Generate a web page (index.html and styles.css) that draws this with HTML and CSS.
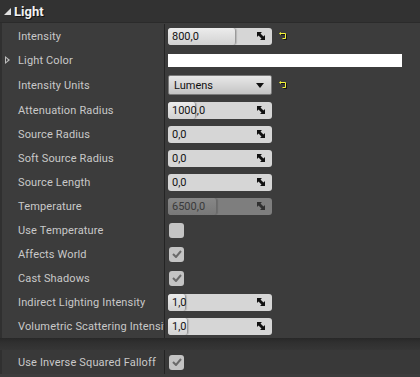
FILE: index.html
```html
<!DOCTYPE html>
<html lang="en">
<head>
  <meta charset="UTF-8">
  <title>Details - Light</title>
  <link rel="stylesheet" href="styles.css">
</head>
<body>
  <div class="panel">
    <div class="category"><span class="cat-arrow"></span>Light</div>

    <div class="section">
      <div class="row">
        <div class="name">Intensity</div>
        <div class="value">
          <div class="num"><div class="fill" style="width:67px"></div><span class="num-text">800,0</span><svg class="spin" viewBox="0 0 8 8"><path d="M0 0H5L3.5 1.5 6.5 4.5 8 3V8H3L4.5 6.5 1.5 3.5 0 5Z"/></svg></div>
          <svg class="reset" viewBox="0 0 10 9"><path class="reset-shadow" d="M2 2.5H7.5V7.5H4.5"/><path d="M1 1.5H6.5V6.5H3.5"/><path d="M0 1.5L2 0V3Z" class="reset-head"/></svg>
        </div>
      </div>

      <div class="row">
        <div class="name"><span class="expander"></span>Light Color</div>
        <div class="value"><div class="color-bar"></div></div>
      </div>

      <div class="row tall">
        <div class="name">Intensity Units</div>
        <div class="value">
          <div class="combo"><span>Lumens</span><span class="combo-arrow"></span></div>
          <svg class="reset" viewBox="0 0 10 9"><path class="reset-shadow" d="M2 2.5H7.5V7.5H4.5"/><path d="M1 1.5H6.5V6.5H3.5"/><path d="M0 1.5L2 0V3Z" class="reset-head"/></svg>
        </div>
      </div>

      <div class="row">
        <div class="name">Attenuation Radius</div>
        <div class="value">
          <div class="num"><div class="fill" style="width:27px"></div><span class="num-text">1000,0</span><svg class="spin" viewBox="0 0 8 8"><path d="M0 0H5L3.5 1.5 6.5 4.5 8 3V8H3L4.5 6.5 1.5 3.5 0 5Z"/></svg></div>
        </div>
      </div>

      <div class="row">
        <div class="name">Source Radius</div>
        <div class="value">
          <div class="num"><span class="num-text">0,0</span><svg class="spin" viewBox="0 0 8 8"><path d="M0 0H5L3.5 1.5 6.5 4.5 8 3V8H3L4.5 6.5 1.5 3.5 0 5Z"/></svg></div>
        </div>
      </div>

      <div class="row">
        <div class="name">Soft Source Radius</div>
        <div class="value">
          <div class="num"><span class="num-text">0,0</span><svg class="spin" viewBox="0 0 8 8"><path d="M0 0H5L3.5 1.5 6.5 4.5 8 3V8H3L4.5 6.5 1.5 3.5 0 5Z"/></svg></div>
        </div>
      </div>

      <div class="row">
        <div class="name">Source Length</div>
        <div class="value">
          <div class="num"><span class="num-text">0,0</span><svg class="spin" viewBox="0 0 8 8"><path d="M0 0H5L3.5 1.5 6.5 4.5 8 3V8H3L4.5 6.5 1.5 3.5 0 5Z"/></svg></div>
        </div>
      </div>

      <div class="row">
        <div class="name">Temperature</div>
        <div class="value">
          <div class="num disabled"><div class="fill" style="width:48px"></div><span class="num-text">6500,0</span><svg class="spin" viewBox="0 0 8 8"><path d="M0 0H5L3.5 1.5 6.5 4.5 8 3V8H3L4.5 6.5 1.5 3.5 0 5Z"/></svg></div>
        </div>
      </div>

      <div class="row">
        <div class="name">Use Temperature</div>
        <div class="value"><div class="check"></div></div>
      </div>

      <div class="row">
        <div class="name">Affects World</div>
        <div class="value"><div class="check"><svg viewBox="0 0 10 8"><path d="M1 4L4 7 9 1"/></svg></div></div>
      </div>

      <div class="row">
        <div class="name">Cast Shadows</div>
        <div class="value"><div class="check"><svg viewBox="0 0 10 8"><path d="M1 4L4 7 9 1"/></svg></div></div>
      </div>

      <div class="row">
        <div class="name">Indirect Lighting Intensity</div>
        <div class="value">
          <div class="num"><div class="fill" style="width:17px"></div><span class="num-text">1,0</span><svg class="spin" viewBox="0 0 8 8"><path d="M0 0H5L3.5 1.5 6.5 4.5 8 3V8H3L4.5 6.5 1.5 3.5 0 5Z"/></svg></div>
        </div>
      </div>

      <div class="row">
        <div class="name">Volumetric Scattering Intensity</div>
        <div class="value">
          <div class="num"><div class="fill" style="width:19px"></div><span class="num-text">1,0</span><svg class="spin" viewBox="0 0 8 8"><path d="M0 0H5L3.5 1.5 6.5 4.5 8 3V8H3L4.5 6.5 1.5 3.5 0 5Z"/></svg></div>
        </div>
      </div>
    </div>

    <div class="separator"></div>

    <div class="section lower">
      <div class="row">
        <div class="name">Use Inverse Squared Falloff</div>
        <div class="value"><div class="check"><svg viewBox="0 0 10 8"><path d="M1 4L4 7 9 1"/></svg></div></div>
      </div>
    </div>
  </div>
</body>
</html>
```

FILE: styles.css
```css
html, body {
  margin: 0;
  padding: 0;
  background-color: #383838;
}

body {
  font-family: Roboto, "Liberation Sans", sans-serif;
  font-size: 11px;
  width: 420px;
  height: 377px;
  overflow: hidden;
}

.panel {
  background-color: #3c3c3c;
  height: 377px;
}

/* Category header */
.category {
  height: 23px;
  background-color: #323232;
  border-bottom: 1px solid #2b2b2b;
  box-sizing: border-box;
  display: flex;
  align-items: center;
  color: #f2f2f2;
  font-size: 13px;
  font-weight: bold;
  text-shadow: 1px 1px 0 #111;
  padding-left: 4px;
}

.cat-arrow {
  width: 0;
  height: 0;
  border-left: 7px solid transparent;
  border-bottom: 7px solid #e0e0e0;
  margin-right: 3px;
  margin-top: 1px;
}

/* Property rows */
.section {
  border-left: 2px solid #303030;
  padding-top: 1px;
}

.row {
  display: flex;
  height: 24px;
}

.row.tall {
  height: 26px;
}

.name {
  position: relative;
  width: 146px;
  flex: none;
  padding-left: 16px;
  border-right: 1px solid #242424;
  display: flex;
  align-items: center;
  color: #c9c9c9;
  letter-spacing: 0.15px;
  white-space: nowrap;
  overflow: hidden;
}

.expander {
  position: absolute;
  left: 3px;
  top: 8px;
  width: 0;
  height: 0;
  border-top: 4px solid transparent;
  border-bottom: 4px solid transparent;
  border-left: 5px solid #bdbdbd;
}

.expander::after {
  content: "";
  position: absolute;
  left: -4px;
  top: -2px;
  border-top: 2px solid transparent;
  border-bottom: 2px solid transparent;
  border-left: 2px solid #3c3c3c;
}

.value {
  flex: 1;
  display: flex;
  align-items: center;
  padding-left: 3px;
}

/* Numeric entry box with slider fill */
.num {
  position: relative;
  width: 104px;
  height: 17px;
  border-radius: 3px;
  background-color: #d6d6d6;
  overflow: hidden;
  display: flex;
  align-items: center;
}

.fill {
  position: absolute;
  left: 0;
  top: 0;
  bottom: 0;
  border-radius: 3px;
  background: linear-gradient(#ececec, #d2d2d2);
  border-right: 1px solid #9a9a9a;
  box-shadow: 1px 0 1px rgba(0, 0, 0, 0.15);
}

.num-text {
  position: relative;
  padding-left: 4px;
  color: #121212;
  flex: 1;
}

.spin {
  position: relative;
  width: 8px;
  height: 8px;
  margin-right: 7px;
  fill: #111;
}

.num.disabled {
  background-color: #7e7e7e;
}

.num.disabled .fill {
  background: linear-gradient(#878787, #787878);
  border-right-color: #6a6a6a;
}

.num.disabled .num-text {
  color: #3a3a3a;
}

.num.disabled .spin {
  fill: #303030;
}

/* Reset-to-default arrow */
.reset {
  width: 10px;
  height: 9px;
  margin-left: 7px;
  fill: none;
  stroke: #f5f53a;
  stroke-width: 1;
}

.reset .reset-shadow {
  stroke: #111;
}

.reset .reset-head {
  fill: #f5f53a;
  stroke: none;
}

/* Colour swatch */
.color-bar {
  width: 234px;
  height: 13px;
  background-color: #ffffff;
}

/* Combo box */
.combo {
  width: 104px;
  height: 20px;
  box-sizing: border-box;
  border: 1px solid #7a7a7a;
  border-radius: 2px;
  background: linear-gradient(#e8e8e8, #c4c4c4);
  display: flex;
  align-items: center;
  justify-content: space-between;
  padding: 0 7px 0 5px;
  color: #111;
  font-size: 11px;
}

.combo-arrow {
  width: 0;
  height: 0;
  border-left: 4px solid transparent;
  border-right: 4px solid transparent;
  border-top: 5px solid #111;
}

/* Check boxes */
.check {
  width: 15px;
  height: 15px;
  margin-left: 1px;
  border-radius: 3px;
  background-color: #c4c4c4;
  display: flex;
  align-items: center;
  justify-content: center;
}

.check svg {
  width: 10px;
  height: 8px;
  fill: none;
  stroke: #6a6a6a;
  stroke-width: 2;
}

/* Section separator */
.separator {
  height: 12px;
  background: linear-gradient(#282828, #303030 40%, #363636);
}

.section.lower {
  background-color: #393939;
  padding-top: 0;
}
```
